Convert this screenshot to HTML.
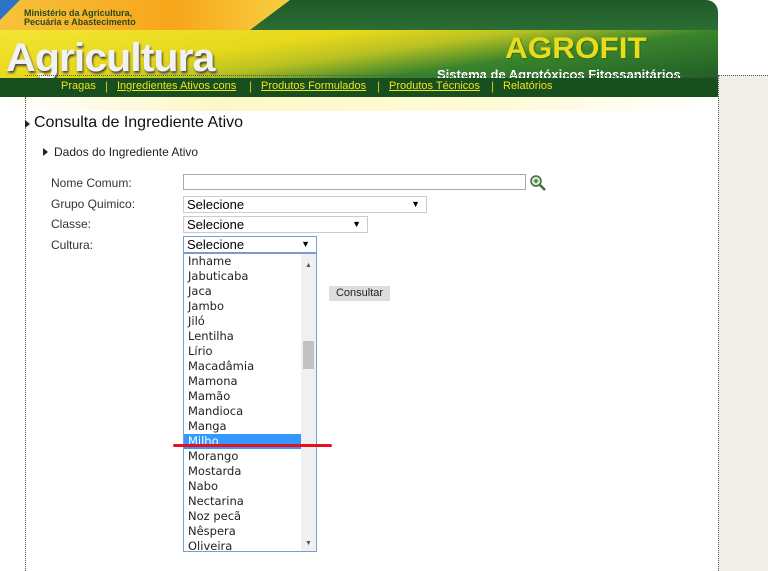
<!DOCTYPE html>
<html><head><meta charset="utf-8"><style>
body{margin:0;width:768px;height:571px;overflow:hidden;background:#fff;font-family:"Liberation Sans",Arial,sans-serif;position:relative}
.a{position:absolute}
.lbl{position:absolute;left:51px;font-size:12px;color:#333}
.sel{position:absolute;border:1px solid #a9a9a9;background:#fff;font-size:13px;color:#000;box-sizing:border-box;padding-left:3px;line-height:15px;height:17px}
.sel i{position:absolute;right:6px;top:0;font-style:normal;font-size:9px}
.it{position:absolute;left:4px;font-family:"DejaVu Sans",sans-serif;font-size:11.5px;color:#222;height:15px;line-height:15px}
.nv{position:absolute;top:80px;font-size:11px;color:#f4e21c;white-space:nowrap}
.sp{position:absolute;top:79px;font-size:12px;color:#d8c41a}
</style></head><body>
<div class="a" style="left:718px;top:75px;width:50px;height:496px;background:#efeee8"></div>
<div class="a" style="left:0;top:0;width:718px;height:97px;border-radius:0 12px 0 0;overflow:hidden;background:linear-gradient(180deg,#1e5a2a 0,#2b6d33 30px,#e8d61c 32px,#f1e62e 45px,#6c9a2a 60px,#2c6f2e 78px)">
 <div class="a" style="left:0;top:0;width:290px;height:30px;background:linear-gradient(90deg,#f6c23a,#f8a51a 60%,#f6d040);clip-path:polygon(0 0,290px 0,250px 30px,0 30px)"></div>
 <div class="a" style="left:0;top:0;width:20px;height:20px;background:#2a74c4;clip-path:polygon(0 0,100% 0,0 100%)"></div>
 <div class="a" style="left:24px;top:9px;font-size:9px;line-height:9px;color:#2a4a1a;font-weight:bold">Ministério da Agricultura,<br>Pecuária e Abastecimento</div>
 <div class="a" style="left:0;top:30px;width:718px;height:48px;background:linear-gradient(172deg,#f2e534 0,#e7d81a 35%,#b9c222 50%,#3a842c 68%,#1f5e26 100%)"></div>
 <div class="a" style="left:6px;top:36px;font-size:40px;font-weight:bold;color:#f2f2f2;text-shadow:1px 2px 2px #444;letter-spacing:-1px;transform:scaleX(1.03);transform-origin:left">Agricultura</div>
 <div class="a" style="left:505px;top:32px;font-size:30px;color:#e8dc1c;text-shadow:1px 1px 1px #2a6a1a;font-weight:bold;transform:scaleX(1.05);transform-origin:left">AGROFIT</div>
 <div class="a" style="left:437px;top:67px;font-size:13px;font-weight:bold;color:#fff">Sistema de Agrotóxicos Fitossanitários</div>
 <div class="a" style="left:0;top:78px;width:718px;height:19px;background:#174f1f"></div>
</div>
<div class="nv" style="left:61px">Pragas</div><div class="sp" style="left:105px">|</div>
<div class="nv" style="left:117px"><u>Ingredientes Ativos cons</u></div><div class="sp" style="left:249px">|</div>
<div class="nv" style="left:261px"><u>Produtos Formulados</u></div><div class="sp" style="left:377px">|</div>
<div class="nv" style="left:389px"><u>Produtos Técnicos</u></div><div class="sp" style="left:491px">|</div>
<div class="nv" style="left:503px">Relatórios</div>
<div class="a" style="left:0;top:97px;width:718px;height:14px;background:linear-gradient(90deg,#fff,#fdf7c8 30%,#fffbd8 70%,#fff)"></div>
<div class="a" style="left:25px;top:97px;height:474px;border-left:1px dotted #555"></div>
<div class="a" style="left:718px;top:75px;height:496px;border-left:1px dotted #555"></div>
<div class="a" style="left:25px;top:75px;width:743px;border-top:1px dotted #555"></div>
<div class="a" style="left:25px;top:120px;width:0;height:0;border-left:5px solid #222;border-top:4px solid transparent;border-bottom:4px solid transparent"></div>
<div class="a" style="left:34px;top:114px;font-size:16px;color:#111">Consulta de Ingrediente Ativo</div>
<div class="a" style="left:43px;top:148px;width:0;height:0;border-left:5px solid #222;border-top:4px solid transparent;border-bottom:4px solid transparent"></div>
<div class="a" style="left:54px;top:145px;font-size:12px;color:#222">Dados do Ingrediente Ativo</div>
<div class="lbl" style="top:176px">Nome Comum:</div>
<div class="lbl" style="top:197px">Grupo Quimico:</div>
<div class="lbl" style="top:217px">Classe:</div>
<div class="lbl" style="top:238px">Cultura:</div>
<div class="sel" style="left:183px;top:174px;width:343px;height:16px"></div>
<svg class="a" style="left:529px;top:174px" width="18" height="18"><circle cx="7" cy="7" r="5" fill="#cfe6c9" stroke="#3f6f3a" stroke-width="1.5"/><path d="M5 7h4M7 5v4" stroke="#3f6f3a" stroke-width="1.3"/><path d="M11 11l5 5" stroke="#3f6f3a" stroke-width="2.5"/></svg>
<div class="sel" style="left:183px;top:196px;width:244px;border-color:#ccc">Selecione<i>▼</i></div>
<div class="sel" style="left:183px;top:216px;width:185px;border-color:#ccc">Selecione<i>▼</i></div>
<div class="sel" style="left:183px;top:236px;width:134px;border-color:#7a9cd3">Selecione<i>▼</i></div>
<div class="a" style="left:329px;top:286px;width:61px;height:15px;background:#ddd;font-size:11px;line-height:15px;text-align:center;color:#222">Consultar</div>
<div class="a" style="left:183px;top:253px;width:134px;height:299px;border:1px solid #7a9cd3;box-sizing:border-box;background:#fff;overflow:hidden">
 <div class="a" style="left:117px;top:0;width:16px;height:299px;background:#f0f0f0"></div>
 <div class="a" style="left:119px;top:87px;width:11px;height:28px;background:#c1c1c1"></div>
 <div class="a" style="left:121px;top:8px;font-size:7px;color:#555">▲</div>
 <div class="a" style="left:121px;top:286px;font-size:7px;color:#555">▼</div>
 <div class="a" style="left:0;top:180px;width:117px;height:15px;background:#3399ff"></div>
 <div class="it" style="top:0">Inhame</div><div class="it" style="top:15px">Jabuticaba</div><div class="it" style="top:30px">Jaca</div><div class="it" style="top:45px">Jambo</div><div class="it" style="top:60px">Jiló</div><div class="it" style="top:75px">Lentilha</div><div class="it" style="top:90px">Lírio</div><div class="it" style="top:105px">Macadâmia</div><div class="it" style="top:120px">Mamona</div><div class="it" style="top:135px">Mamão</div><div class="it" style="top:150px">Mandioca</div><div class="it" style="top:165px">Manga</div><div class="it" style="top:180px;color:#fff">Milho</div><div class="it" style="top:195px">Morango</div><div class="it" style="top:210px">Mostarda</div><div class="it" style="top:225px">Nabo</div><div class="it" style="top:240px">Nectarina</div><div class="it" style="top:255px">Noz pecã</div><div class="it" style="top:270px">Nêspera</div><div class="it" style="top:285px">Oliveira</div>
</div>
<div class="a" style="left:173px;top:444px;width:159px;height:3px;background:#e8101c;border-radius:2px"></div>
</body></html>
